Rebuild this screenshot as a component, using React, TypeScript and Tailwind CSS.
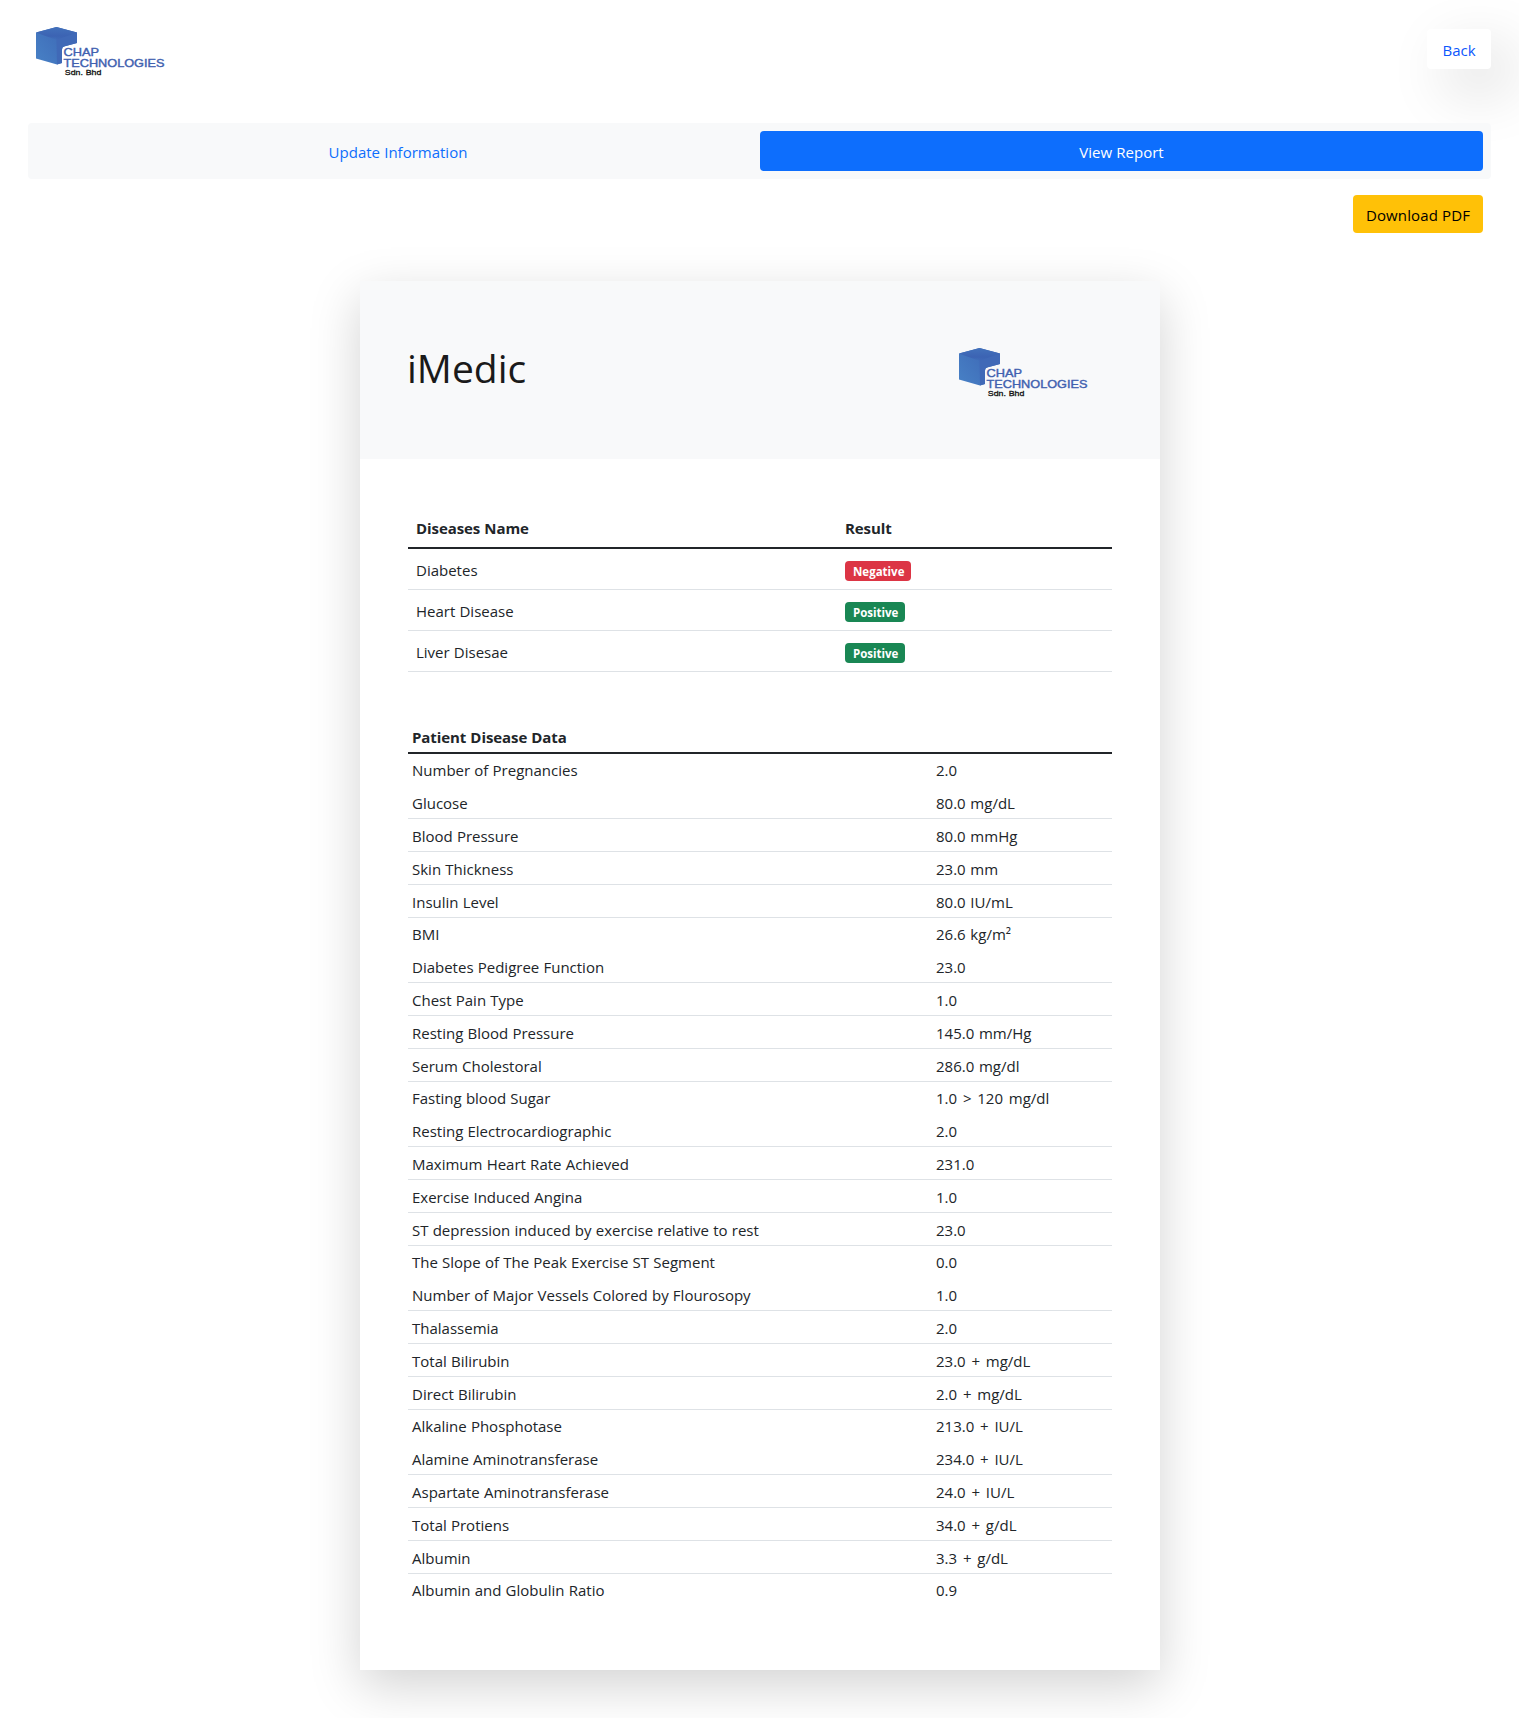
const FONT = "font-['Open_Sans','Noto_Sans',sans-serif]";

function Logo({ id, className = "" }: { id: string; className?: string }) {
  return (
    <svg width="136" height="56" viewBox="0 0 136 56" className={className}>
      <defs>
        <linearGradient id={id + "l"} x1="0" y1="0.9" x2="1" y2="0.2">
          <stop offset="0" stopColor="#4780c5" />
          <stop offset="1" stopColor="#3c65b4" />
        </linearGradient>
        <linearGradient id={id + "t"} x1="0" y1="0" x2="0" y2="1">
          <stop offset="0" stopColor="#4271bb" />
          <stop offset="0.7" stopColor="#3c63b3" />
          <stop offset="1" stopColor="#3c65b4" stopOpacity="0" />
        </linearGradient>
      </defs>
      <path d="M8 12.5 28.5 7 49 12.5V23L36 26.5Q34 27 34 29.5V43L29 44.5 8 38.5Z" fill={`url(#${id}l)`} />
      <path d="M28.5 18 49 12.5V23L36 26.5Q34 27 34 29.5V43L29 44.5Z" fill="#4069b7" />
      <path d="M8 12.5 28.5 7 49 12.5 28.5 20Z" fill={`url(#${id}t)`} />
      <g fontFamily="Liberation Sans, sans-serif" fill="#4060af" stroke="#4060af" strokeWidth="0.4">
        <text x="35.5" y="36.4" fontSize="11.6" textLength="35.5" lengthAdjust="spacingAndGlyphs">CHAP</text>
        <text x="35.5" y="47.4" fontSize="11.4" textLength="101" lengthAdjust="spacingAndGlyphs">TECHNOLOGIES</text>
        <text x="36.8" y="54.9" fontSize="7.8" textLength="36.5" lengthAdjust="spacingAndGlyphs" fill="#111" stroke="#111" strokeWidth="0.3">Sdn. Bhd</text>
      </g>
    </svg>
  );
}

const results = [
  ["Diabetes", "Negative"],
  ["Heart Disease", "Positive"],
  ["Liver Disesae", "Positive"],
];

const data = [
  ["Number of Pregnancies", "2.0"],
  ["Glucose", "80.0 mg/dL"],
  ["Blood Pressure", "80.0 mmHg"],
  ["Skin Thickness", "23.0 mm"],
  ["Insulin Level", "80.0 IU/mL"],
  ["BMI", "26.6 kg/m²"],
  ["Diabetes Pedigree Function", "23.0"],
  ["Chest Pain Type", "1.0"],
  ["Resting Blood Pressure", "145.0 mm/Hg"],
  ["Serum Cholestoral", "286.0 mg/dl"],
  ["Fasting blood Sugar", "1.0 > 120 mg/dl"],
  ["Resting Electrocardiographic", "2.0"],
  ["Maximum Heart Rate Achieved", "231.0"],
  ["Exercise Induced Angina", "1.0"],
  ["ST depression induced by exercise relative to rest", "23.0"],
  ["The Slope of The Peak Exercise ST Segment", "0.0"],
  ["Number of Major Vessels Colored by Flourosopy", "1.0"],
  ["Thalassemia", "2.0"],
  ["Total Bilirubin", "23.0 + mg/dL"],
  ["Direct Bilirubin", "2.0 + mg/dL"],
  ["Alkaline Phosphotase", "213.0 + IU/L"],
  ["Alamine Aminotransferase", "234.0 + IU/L"],
  ["Aspartate Aminotransferase", "24.0 + IU/L"],
  ["Total Protiens", "34.0 + g/dL"],
  ["Albumin", "3.3 + g/dL"],
  ["Albumin and Globulin Ratio", "0.9"],
];

export default function App() {
  return (
    <div className={`h-[1718px] overflow-hidden bg-white px-7 text-[15px] leading-6 text-[#212529] [word-spacing:0.3px] ${FONT}`}>
      <header className="flex h-[123px] items-start justify-between">
        <Logo id="a" className="mt-5 overflow-visible" />
        <button className="mt-[29px] h-10 w-16 rounded bg-white pt-0.5 text-[#0d57fd] shadow-[20px_20px_60px_#d9d9d9,-20px_-20px_60px_#ffffff]">Back</button>
      </header>

      <nav className="relative flex h-14 rounded bg-[#f8f9fa] p-2">
        <a className="flex flex-1 items-center justify-center pt-0.5 text-[#0d6efd]">Update Information</a>
        <a className="flex w-[723px] items-center justify-center rounded bg-[#0d6efd] pt-0.5 text-white">View Report</a>
      </nav>

      <div className="flex justify-end px-2 pt-4">
        <button className="h-[38px] w-[130px] rounded bg-[#ffc107] pt-0.5 tracking-[0.12px] text-black">Download PDF</button>
      </div>

      <main className="mt-12 ml-[332px] h-[1389px] w-[800px] bg-white shadow-[0_16px_48px_rgba(0,0,0,0.175)]">
        <div className="flex h-[178px] items-start justify-between bg-[#f8f9fa] px-12">
          <h1 className="mt-[63px] -ml-px text-[39px] leading-[48px] text-[#1a1a1a]">iMedic</h1>
          <Logo id="b" className="mt-[60px] mr-[25px] overflow-visible" />
        </div>

        <section className="px-12 pt-12">
          <div className="grid h-[42px] grid-cols-[429px_1fr] items-center border-b-2 border-[#212529] pt-0.5 font-bold tracking-[-0.08px]">
            <div className="px-2">Diseases Name</div>
            <div className="px-2">Result</div>
          </div>
          {results.map(([name, result]) => (
            <div key={name} className="grid h-[41px] grid-cols-[429px_1fr] items-center border-b border-[#dee2e6]">
              <div className="px-2 pt-0.5">{name}</div>
              <div className="flex px-2 pt-1">
                <span className={`flex h-5 items-center rounded px-2 pt-0.5 text-[11.5px] font-bold text-white ${result === "Negative" ? "w-[66px] bg-[#dc3545]" : "w-[60px] bg-[#198754]"}`}>{result}</span>
              </div>
            </div>
          ))}
        </section>

        <section className="px-12 pt-[50px]">
          <div className="flex h-8 items-center border-b-2 border-[#212529] px-1 font-bold tracking-[-0.08px]">Patient Disease Data</div>
          {data.map(([label, value], i) => (
            <div key={label} className={`grid grid-cols-[524px_1fr] ${i % 5 === 0 ? "py-1" : "border-b border-[#dee2e6] pt-[5px] pb-[3px]"}`}>
              <div className="px-1">{label}</div>
              <div className={`px-1 ${/[+>]/.test(value) ? "[word-spacing:1.9px]" : "[word-spacing:0.8px]"}`}>{value}</div>
            </div>
          ))}
        </section>
      </main>
    </div>
  );
}
